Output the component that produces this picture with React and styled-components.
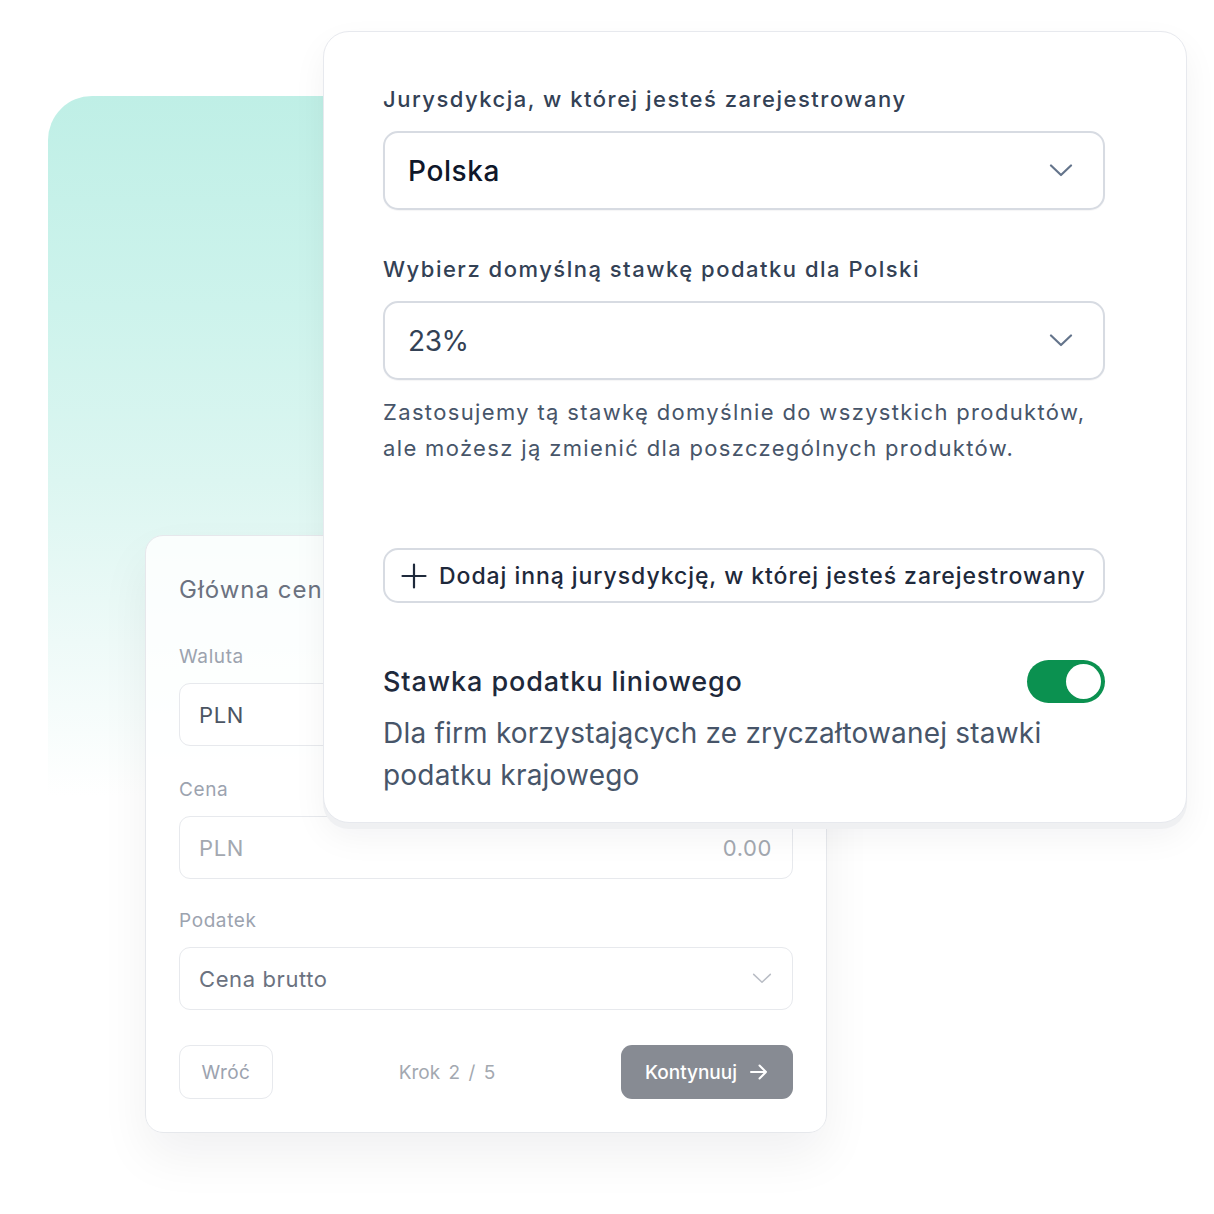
import React from "react";
import styled, { createGlobalStyle } from "styled-components";

const Global = createGlobalStyle`
  html, body { margin: 0; padding: 0; background: #ffffff; }
  body { font-family: Inter, "Noto Sans", "Liberation Sans", sans-serif; -webkit-font-smoothing: antialiased; }
  * { box-sizing: border-box; }
`;

const Stage = styled.div`
  position: relative;
  width: 1214px;
  height: 1214px;
  overflow: hidden;
  background: #ffffff;
`;

const Backdrop = styled.div`
  position: absolute;
  left: 48px;
  top: 96px;
  width: 1080px;
  height: 700px;
  border-top-left-radius: 44px;
  background: linear-gradient(
    to bottom,
    #bfefe6 0%,
    #cdf3ec 30%,
    #dcf6f1 55%,
    #eefaf8 78%,
    rgba(255, 255, 255, 0) 100%
  );
`;

/* ---------- back card ---------- */

const BackCard = styled.section`
  position: absolute;
  left: 145px;
  top: 535px;
  width: 682px;
  display: flex;
  flex-direction: column;
  padding: 38px 33px 33px;
  border: 1px solid #e6e8ec;
  border-radius: 18px;
  background: rgba(255, 255, 255, 0.82);
  box-shadow: 0 24px 50px rgba(15, 23, 42, 0.06);
`;

const BackTitle = styled.h2`
  margin: 0;
  font-size: 24px;
  line-height: 32px;
  font-weight: 400;
  letter-spacing: 1px;
  color: #6b7280;
  white-space: nowrap;
`;

const BackField = styled.div`
  display: flex;
  flex-direction: column;
  gap: 13px;
  margin-top: ${(p) => p.$top}px;
`;

const BackLabel = styled.label`
  font-size: 19px;
  line-height: 26px;
  letter-spacing: 0.6px;
  color: #9ca3af;
`;

const BackInput = styled.div`
  height: 63px;
  display: flex;
  align-items: center;
  justify-content: space-between;
  padding: 0 20px 0 19px;
  border: 1.5px solid #e7e9ed;
  border-radius: 11px;
  background: #ffffff;
  font-size: 22px;
  letter-spacing: 0.6px;
  color: ${(p) => p.$color || "#4b5563"};
`;

const Muted = styled.span`
  color: #a3a8b0;
`;

const Footer = styled.div`
  margin-top: 35px;
  display: flex;
  align-items: center;
  justify-content: space-between;
`;

const GhostButton = styled.button`
  height: 54px;
  width: 94px;
  border: 1.5px solid #e7e9ed;
  border-radius: 11px;
  background: #ffffff;
  font-family: inherit;
  font-size: 19px;
  letter-spacing: 0.4px;
  color: #9ca3af;
`;

const Step = styled.span`
  font-size: 19px;
  color: #a3a8b0;
  word-spacing: 3px;
`;

const PrimaryButton = styled.button`
  height: 54px;
  width: 172px;
  display: flex;
  align-items: center;
  justify-content: center;
  gap: 12px;
  border: none;
  border-radius: 11px;
  background: #878b93;
  font-family: inherit;
  font-size: 19px;
  font-weight: 500;
  color: #ffffff;
`;

/* ---------- front card ---------- */

const FrontCard = styled.section`
  position: absolute;
  left: 323px;
  top: 31px;
  width: 864px;
  display: flex;
  flex-direction: column;
  padding: 52px 81px 26px 59px;
  border: 1.5px solid #e7e9ee;
  border-radius: 26px;
  background: #ffffff;
  box-shadow: 0 6px 0 #eff0f2, 0 14px 34px rgba(15, 23, 42, 0.05);
`;

const Label = styled.label`
  display: block;
  font-size: 22px;
  line-height: 30px;
  font-weight: 500;
  letter-spacing: 1.5px;
  color: #334155;
  white-space: nowrap;
  margin-top: ${(p) => p.$top || 0}px;
`;

const Select = styled.div`
  margin-top: 17px;
  height: 79px;
  display: flex;
  align-items: center;
  justify-content: space-between;
  padding: 0 30px 0 23px;
  border: 2px solid #d7dbe2;
  border-radius: 15px;
  background: #ffffff;
  box-shadow: 0 1px 1px rgba(15, 23, 42, 0.04);
`;

const SelectValue = styled.span`
  font-size: 28px;
  font-weight: ${(p) => (p.$strong ? 500 : 400)};
  letter-spacing: ${(p) => (p.$strong ? "0.6px" : "-0.4px")};
  color: ${(p) => (p.$strong ? "#0f172a" : "#334155")};
`;

const Helper = styled.p`
  margin: 14px 0 0;
  font-size: 22px;
  line-height: 36px;
  letter-spacing: 1.35px;
  color: #475569;
  white-space: nowrap;
`;

const AddButton = styled.button`
  margin-top: 82px;
  height: 55px;
  width: 100%;
  display: flex;
  align-items: center;
  gap: 12px;
  padding: 0 16px;
  border: 2px solid #d7dbe2;
  border-radius: 15px;
  background: #ffffff;
  font-family: inherit;
  font-size: 23px;
  font-weight: 500;
  letter-spacing: 0.95px;
  color: #1e293b;
  white-space: nowrap;
`;

const ToggleRow = styled.div`
  margin-top: 57px;
  display: flex;
  align-items: center;
  justify-content: space-between;
`;

const RowTitle = styled.h3`
  margin: 0;
  font-size: 27px;
  line-height: 36px;
  font-weight: 500;
  letter-spacing: 0.9px;
  color: #1e293b;
`;

const Toggle = styled.div`
  width: 78px;
  height: 43px;
  border-radius: 22px;
  background: #0b9150;
  padding: 4px;
  display: flex;
  justify-content: flex-end;
`;

const Knob = styled.div`
  width: 35px;
  height: 35px;
  border-radius: 50%;
  background: #ffffff;
`;

const Desc = styled.p`
  margin: 9px 0 0;
  font-size: 28px;
  line-height: 42px;
  letter-spacing: 0.2px;
  color: #475569;
  white-space: nowrap;
`;

const Chevron = ({ color = "#64748b", w = 24, h = 13, sw = 2.2 }) => (
  <svg width={w} height={h} viewBox="0 0 24 13" fill="none">
    <polyline
      points="2,1.5 12,11 22,1.5"
      stroke={color}
      strokeWidth={sw}
      strokeLinecap="round"
      strokeLinejoin="round"
    />
  </svg>
);

const Plus = () => (
  <svg width="26" height="26" viewBox="0 0 26 26" fill="none">
    <path d="M13 1.5v23M1.5 13h23" stroke="#1e293b" strokeWidth="2.2" strokeLinecap="round" />
  </svg>
);

const Arrow = () => (
  <svg width="20" height="20" viewBox="0 0 20 20" fill="none">
    <path
      d="M2 10h15M10.5 3.5 17 10l-6.5 6.5"
      stroke="#ffffff"
      strokeWidth="2"
      strokeLinecap="round"
      strokeLinejoin="round"
    />
  </svg>
);

export default function App() {
  return (
    <Stage>
      <Global />
      <Backdrop />

      <BackCard>
        <BackTitle>Główna cena</BackTitle>
        <BackField $top={38}>
          <BackLabel>Waluta</BackLabel>
          <BackInput>PLN</BackInput>
        </BackField>
        <BackField $top={31}>
          <BackLabel>Cena</BackLabel>
          <BackInput>
            <Muted>PLN</Muted>
            <Muted>0.00</Muted>
          </BackInput>
        </BackField>
        <BackField $top={29}>
          <BackLabel>Podatek</BackLabel>
          <BackInput $color="#6b7280">
            Cena brutto
            <Chevron color="#b9bdc5" w={20} h={11} sw={1.8} />
          </BackInput>
        </BackField>
        <Footer>
          <GhostButton>Wróć</GhostButton>
          <Step>Krok 2 / 5</Step>
          <PrimaryButton>
            Kontynuuj
            <Arrow />
          </PrimaryButton>
        </Footer>
      </BackCard>

      <FrontCard>
        <Label>Jurysdykcja, w której jesteś zarejestrowany</Label>
        <Select>
          <SelectValue $strong>Polska</SelectValue>
          <Chevron />
        </Select>

        <Label $top={44}>Wybierz domyślną stawkę podatku dla Polski</Label>
        <Select>
          <SelectValue>23%</SelectValue>
          <Chevron />
        </Select>
        <Helper>
          Zastosujemy tą stawkę domyślnie do wszystkich produktów,
          <br />
          ale możesz ją zmienić dla poszczególnych produktów.
        </Helper>

        <AddButton>
          <Plus />
          Dodaj inną jurysdykcję, w której jesteś zarejestrowany
        </AddButton>

        <ToggleRow>
          <RowTitle>Stawka podatku liniowego</RowTitle>
          <Toggle>
            <Knob />
          </Toggle>
        </ToggleRow>
        <Desc>
          Dla firm korzystających ze zryczałtowanej stawki
          <br />
          podatku krajowego
        </Desc>
      </FrontCard>
    </Stage>
  );
}
